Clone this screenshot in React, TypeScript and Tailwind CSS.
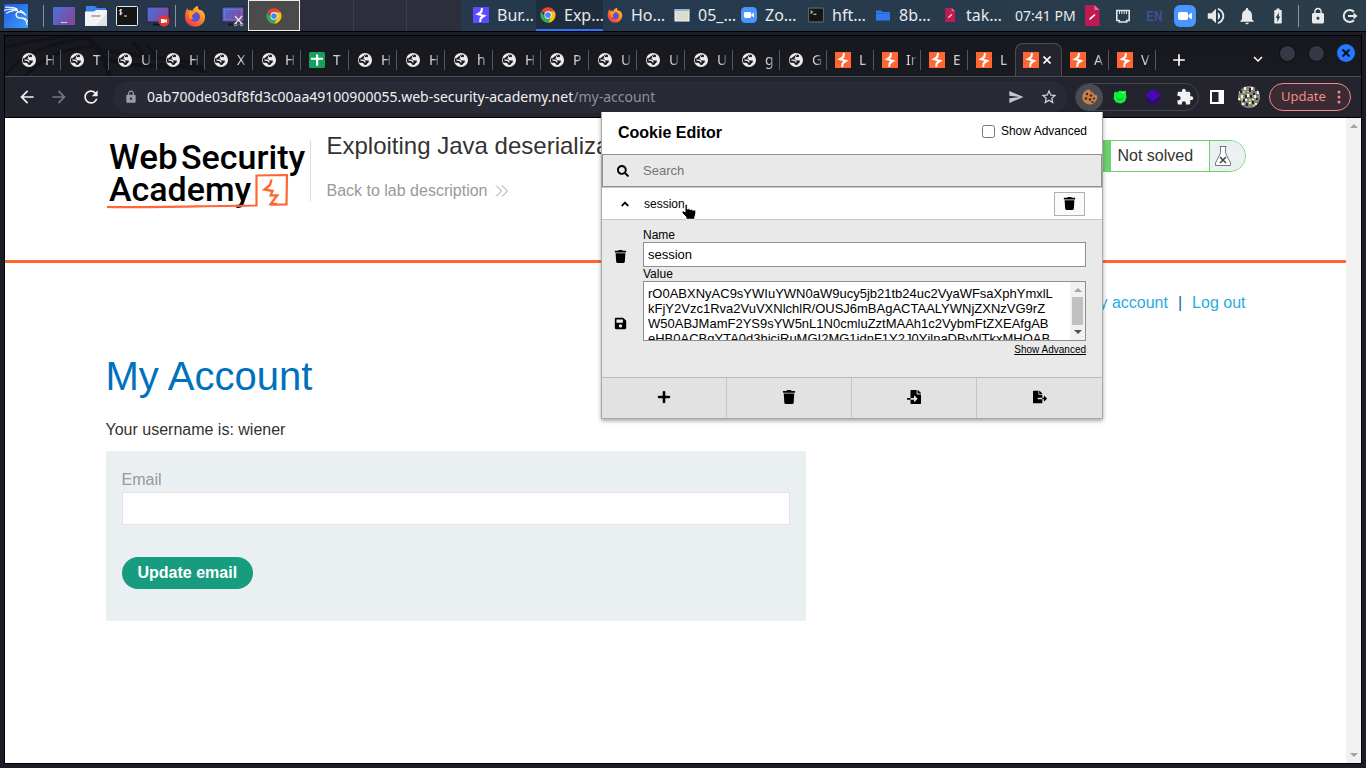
import React, { type ReactNode } from "react";
import { FaAngleUp, FaFileExport, FaFileImport, FaPlus, FaSave, FaSearch, FaTrash } from "react-icons/fa";
import {
  MdAdd,
  MdArrowBack,
  MdArrowForward,
  MdBatteryChargingFull,
  MdExtension,
  MdKeyboardArrowDown,
  MdLock,
  MdNotifications,
  MdRefresh,
  MdSend,
  MdStarBorder,
  MdVolumeUp,
} from "react-icons/md";
import { SiKalilinux } from "react-icons/si";

const COOKIE_VALUE = [
  "rO0ABXNyAC9sYWIuYWN0aW9ucy5jb21tb24uc2VyaWFsaXphYmxlL",
  "kFjY2Vzc1Rva2VuVXNlchlR/OUSJ6mBAgACTAALYWNjZXNzVG9rZ",
  "W50ABJMamF2YS9sYW5nL1N0cmluZztMAAh1c2VybmFtZXEAfgAB",
  "eHB0ACBqYTA0d3hjcjRuMGI2MG1jdnF1Y2J0YjlnaDByNTkxMHQAB",
  "ndpZW5lcg==",
].join("\n");

/* ---------- logos ---------- */

function ChromeLogo({ className = "size-4" }: { className?: string }) {
  return (
    <svg viewBox="0 0 48 48" className={className} aria-hidden="true">
      <path d="M24 24 4.1 12.5A23 23 0 0 1 43.9 12.5H24Z" fill="#e94335" />
      <path d="M24 13H43.9A23 23 0 0 1 24 47L33.5 29.5Z" fill="#fbc116" />
      <path d="M4.1 12.5 14.5 29.5 33.5 29.5 24 47A23 23 0 0 1 4.1 12.5Z" fill="#34a853" />
      <circle cx="24" cy="24" r="11" fill="#fff" />
      <circle cx="24" cy="24" r="8.6" fill="#4285f4" />
    </svg>
  );
}

function FirefoxLogo({ className = "size-4" }: { className?: string }) {
  return (
    <svg viewBox="0 0 24 24" className={className} aria-hidden="true">
      <defs>
        <linearGradient id="fox" x1="1" y1="0" x2="0.2" y2="1">
          <stop offset="0" stopColor="#ffe04a" />
          <stop offset="0.45" stopColor="#ff8a20" />
          <stop offset="1" stopColor="#f0304e" />
        </linearGradient>
      </defs>
      <path
        d="M15.5 1c-.8 1.5-.2 3 1 4.2l3 .8c2.4 2 3.5 4.5 3.5 7.3A11 10.5 0 0 1 1 13.3C1 9.5 2 6 3.6 3.3l1 2.5L7 5.2l2 1.3C10 3.5 12.5 1.5 15.5 1Z"
        fill="url(#fox)"
      />
      <circle cx="12.3" cy="13" r="5.2" fill="#5b4fd6" />
      <path d="M4.5 8.5 8 6.6l2.5 1.2 2 .4-2.2 2-1.5 1.3c-.6 1.4.2 3 1.7 3.4-2.5 1.4-5-.4-5-2.9Z" fill="#ff9a25" />
    </svg>
  );
}

function BurpLogo({ className = "size-4", color = "#ff6633" }: { className?: string; color?: string }) {
  return (
    <svg viewBox="0 0 16 16" className={className} aria-hidden="true">
      <rect width="16" height="16" fill={color} />
      <path d="M9 1 8.4 5 4.8 7.2 11.2 8.8 7.6 11.2 7.2 15" fill="none" stroke="#fff" strokeWidth="2" />
      <path d="M8.4 3 4.2 7.6 8 7.8ZM8 8.2l4 .4L7.6 13Z" fill="#fff" />
    </svg>
  );
}

function GlobeLogo() {
  return (
    <svg viewBox="0 0 16 16" className="size-4" aria-hidden="true">
      <circle cx="8" cy="8" r="7" fill="#ececec" />
      <path
        d="M9.3 2.4c-1.9 0-2 1.3-3.400 1.800C4.600 4.700 4.900 6 3 6.200l-1 .4C1.700 8 1.800 9.500 2.500 10.700c1.800.2 3.800-.1 4 .9.2.9.600 1.400 1.700 1.500l1.700-.500c0-1.200.7-1.500 1.300-1.900.8-.5.8-1.700.4-2.200H8.800c-.9 0-1.200-.6-1.200-1.300H6.200c.1-.8.800-1.100 1.600-1.100h1.600c.2-.8.9-1 1.500-1.400V3.200Z"
        fill="#17181d"
      />
      <path d="M3.400 7.800c1.300.4 2.600.2 3.700.9.7.5.5 1.400 1.300 1.700" stroke="#ececec" strokeWidth="1.3" fill="none" />
      <path d="M8.600 3.600c-.9.300-1.500 1.100-1.300 1.900h2.500" stroke="#ececec" strokeWidth="1" fill="none" />
    </svg>
  );
}

function SheetsLogo() {
  return (
    <svg viewBox="0 0 16 16" className="size-4" aria-hidden="true">
      <rect width="16" height="16" rx="1.5" fill="#14a15f" />
      <path d="M7 2.500h2.200v3.300H14v2H9.200v6H7v-6H2v-2h5Z" fill="#fff" />
    </svg>
  );
}

function ZoomLogo({ className = "size-4" }: { className?: string }) {
  return (
    <svg viewBox="0 0 22 22" className={className} aria-hidden="true">
      <rect width="22" height="22" rx="6" fill="#4a94ff" />
      <rect x="4" y="7" width="10" height="8" rx="2" fill="#fff" />
      <path d="M14.500 10 18 7.500v7L14.500 12Z" fill="#fff" />
    </svg>
  );
}

function TerminalLogo({ className = "size-4", big = false }: { className?: string; big?: boolean }) {
  return (
    <svg viewBox="0 0 22 20" className={className} aria-hidden="true">
      <rect x=".5" y=".5" width="21" height="19" rx="1" fill="#151515" stroke={big ? "#e8e8e8" : "#8a8d90"} />
      {big ? (
        <path d="M6 4c-2-.6-3 .2-2.400 1.200s2.500.8 2.400 2-1.800 1.300-2.800.6M4.700 3v6.200M8 10h3" fill="none" stroke="#eee" />
      ) : (
        <path d="m3.500 4 2.500 2-2.500 2M7.500 9h4" fill="none" stroke="#ddd" strokeWidth="1.5" />
      )}
    </svg>
  );
}

function FolderLogo() {
  return (
    <svg viewBox="0 0 16 16" className="size-4" aria-hidden="true">
      <path d="M1 3.500h5l1.500 1.500H15v8.500H1Z" fill="#3478f0" />
      <path d="M1 6.500h14" stroke="#2a64d4" />
    </svg>
  );
}

function NoteLogo({ className = "size-4" }: { className?: string }) {
  return (
    <svg viewBox="0 0 16 21" className={className} aria-hidden="true">
      <path d="M1 0h9.500l5 5v16H1Z" fill="#c01a52" />
      <path d="M10.500 0v5h5Z" fill="#d9749a" />
      <path d="m5 15 1-2.200L10.500 9l1 1L7 14.300Z" fill="#fff" />
    </svg>
  );
}

function WindowLogo() {
  return (
    <svg viewBox="0 0 16 16" className="size-4" aria-hidden="true">
      <rect x="1" y="2.5" width="14" height="11.5" fill="#dcdcd2" stroke="#f6f6f6" />
      <path d="M1 3h14" stroke="#7ea6d8" strokeWidth="1.5" />
    </svg>
  );
}

function DesktopLogo({ kind }: { kind: "plain" | "record" | "cut" }) {
  return (
    <svg viewBox="0 0 24 22" className="h-[22px] w-6" aria-hidden="true">
      <defs>
        <linearGradient id={`desk-${kind}`} x1="0" y1="0" x2="1" y2="0.6">
          <stop offset="0" stopColor="#4673dc" />
          <stop offset="1" stopColor="#84489c" />
        </linearGradient>
      </defs>
      {kind === "plain" ? (
        <>
          <rect x="1" y="2" width="22" height="18" fill={`url(#desk-${kind})`} />
          <path d="M9 17.500h6" stroke="#fff" strokeDasharray="1.5 .7" />
        </>
      ) : (
        <>
          <rect x="1" y="2" width="22" height="15" fill={`url(#desk-${kind})`} stroke="#202434" />
          <path d="M7 19.500h9" stroke="#11151d" strokeWidth="2" />
        </>
      )}
      {kind === "record" && (
        <>
          <circle cx="18" cy="16" r="5.6" fill="#e63430" />
          <path d="M15 14h3.500v1.200l2.300-1.200v4l-2.300-1.200V18H15Z" fill="#fff" />
        </>
      )}
      {kind === "cut" && (
        <>
          <rect x="3.5" y="4.5" width="17" height="10" fill="none" stroke="#7c8be6" strokeDasharray="1 1" />
          <path d="m14 11 7 8m0-8-7 8" stroke="#e0e0e0" strokeWidth="1.3" />
          <circle cx="14.5" cy="19.3" r="1.4" fill="none" stroke="#ccc" />
          <circle cx="20.5" cy="19.3" r="1.4" fill="none" stroke="#ccc" />
        </>
      )}
    </svg>
  );
}

function FilesLogo() {
  return (
    <svg viewBox="0 0 24 22" className="h-[22px] w-6" aria-hidden="true">
      <path d="M2 1h9l2 2h9v6H2Z" fill="#3c82f0" />
      <path d="M1 6.500h9l2-1.500h11V21H1Z" fill="#f3f3f3" />
      <path d="M23 8 12 21h11Z" fill="#e2e2e2" />
      <path d="M8 11h8" stroke="#9b9b9b" strokeWidth="1.5" strokeLinecap="round" />
    </svg>
  );
}

/* ---------- desktop panel ---------- */

function Separator() {
  return <span className="block h-[22px] w-px bg-[#8b929b]" />;
}

const TASKS: { label: string; icon: ReactNode; active?: boolean }[] = [
  { label: "Bur…", icon: <BurpLogo color="#5b4dff" /> },
  { label: "Exp…", icon: <ChromeLogo />, active: true },
  { label: "Ho…", icon: <FirefoxLogo /> },
  { label: "05_…", icon: <WindowLogo /> },
  { label: "Zo…", icon: <ZoomLogo /> },
  { label: "hft…", icon: <TerminalLogo /> },
  { label: "8b…", icon: <FolderLogo /> },
  { label: "tak…", icon: <NoteLogo className="h-[14px] w-4" /> },
];

const TRAY: { name: string; icon: ReactNode }[] = [
  { name: "Notes", icon: <NoteLogo className="h-[21px] w-4" /> },
  {
    name: "Network",
    icon: (
      <svg viewBox="0 0 16 16" className="size-4" aria-hidden="true">
        <path d="M1.800 2.500h12.400v10h-2.500V14H4.300v-1.500H1.800Z" fill="none" stroke="#e4e6e8" strokeWidth="1.6" />
        <path d="M4.500 3v3M6.800 3v3M9.200 3v3M11.500 3v3" stroke="#e4e6e8" />
      </svg>
    ),
  },
  {
    name: "Keyboard layout",
    icon: <span className="font-['DejaVu_Sans_Mono',monospace] text-sm font-bold text-[#414c94]">EN</span>,
  },
  { name: "Zoom", icon: <ZoomLogo className="size-[22px]" /> },
  { name: "Volume", icon: <MdVolumeUp className="size-[22px]" /> },
  { name: "Notifications", icon: <MdNotifications className="size-5" /> },
  { name: "Battery", icon: <MdBatteryChargingFull className="size-[18px]" /> },
];

function DesktopPanel() {
  return (
    <header className="flex h-[31px] shrink-0 items-stretch bg-linear-to-r from-[#27374b] via-[#253a4e] to-[#2b3d49] font-['Noto_Sans',sans-serif] text-[#e8eaec]">
      <div className="flex w-[248px] shrink-0 items-center">
        <button aria-label="Applications" className="ml-1 flex size-6 items-center justify-center bg-linear-to-br from-[#2456d8] to-[#3da0ff] text-white">
          <SiKalilinux className="size-6" stroke="currentColor" strokeWidth="0.7" />
        </button>
        <span className="ml-[15px]"><Separator /></span>
        <div className="ml-2 flex items-center gap-2">
          <button aria-label="Show desktop"><DesktopLogo kind="plain" /></button>
          <button aria-label="Files"><FilesLogo /></button>
          <button aria-label="Terminal"><TerminalLogo big className="h-5 w-[22px]" /></button>
          <button aria-label="Screen recorder"><DesktopLogo kind="record" /></button>
        </div>
        <span className="ml-[5px]"><Separator /></span>
        <button aria-label="Firefox" className="ml-2"><FirefoxLogo className="size-[22px]" /></button>
        <button aria-label="Screenshot" className="ml-[15px]"><DesktopLogo kind="cut" /></button>
      </div>
      <div className="flex w-[213px] shrink-0 bg-[#2c2e3b]">
        <button aria-label="Workspace 1" className="flex w-[52px] items-center justify-center border border-[#ededed] bg-[#4b4b4b]">
          <ChromeLogo />
        </button>
        <button aria-label="Workspace 2" className="w-[54px] border-r border-[#3b3e4c]" />
        <button aria-label="Workspace 3" className="w-[53px] border-r border-[#3b3e4c]" />
        <button aria-label="Workspace 4" className="flex-1" />
      </div>
      <nav aria-label="Windows" className="flex pl-2">
        {TASKS.map((t) => (
          <button
            key={t.label}
            className={`flex w-[67px] items-center gap-2 border-b-2 pl-1 text-base whitespace-nowrap ${
              t.active ? "border-[#2777ff] bg-[#202d3c]" : "border-transparent"
            }`}
          >
            <span className="shrink-0">{t.icon}</span>
            {t.label}
          </button>
        ))}
      </nav>
      <div className="flex flex-1 items-center pl-[10px]">
        <time className="mr-px text-sm whitespace-nowrap">07:41 PM</time>
        {TRAY.map(({ name, icon }) => (
          <button key={name} aria-label={name} className="flex w-[31px] items-center justify-center">{icon}</button>
        ))}
        <span className="ml-1"><Separator /></span>
        <button aria-label="Lock" className="ml-[10px]"><MdLock className="size-[18px]" /></button>
        <button aria-label="Log out" className="ml-[15px]">
          <svg viewBox="0 0 16 16" className="size-4" fill="none" stroke="#e4e6e8" strokeWidth="2" aria-hidden="true">
            <path d="M12 12.200A6 6 0 1 1 12 3.800M6 8h7" />
            <path d="m11.500 4.500 4 3.500-4 3.500Z" fill="#e4e6e8" stroke="none" />
          </svg>
        </button>
      </div>
    </header>
  );
}

/* ---------- browser chrome ---------- */

type Kind = "globe" | "sheets" | "burp";
const TABS: { label: string; kind: Kind; active?: boolean }[] = [
  ..."H,T,U,H,X,H".split(",").map((label) => ({ label, kind: "globe" as Kind })),
  { label: "T", kind: "sheets" },
  ..."H,H,h,H,P,U,U,U,g,G".split(",").map((label) => ({ label, kind: "globe" as Kind })),
  ..."L,In,E,L".split(",").map((label) => ({ label, kind: "burp" as Kind })),
  { label: "", kind: "burp", active: true },
  { label: "A", kind: "burp" },
  { label: "V", kind: "burp" },
];

function TabIcon({ kind }: { kind: Kind }) {
  if (kind === "sheets") return <SheetsLogo />;
  if (kind === "burp") return <BurpLogo />;
  return <GlobeLogo />;
}

function TabStrip() {
  return (
    <div className="relative flex h-[41px] items-end overflow-hidden border-b border-[#4b4d56] bg-linear-to-b from-[#17181d] to-[#1a1b21] pl-2">
      <svg viewBox="0 0 220 40" className="absolute top-0 left-0 h-10 w-[220px]" fill="none" stroke="#121318" aria-hidden="true">
        <path d="M0 40C15 18 45 6 85 2M20 40C40 20 60 12 90 10M0 12C25 4 50 1 80 0" strokeWidth="3" />
        <path d="M82 0c12 12 20 26 22 40" strokeWidth="5" />
        <path d="M92 14c18 2 40 6 60 8 20 2 36 2 48 13-20-7-34-4-46-6M128 6l10 12M142 8l8 12M100 20c18 14 50 6 72 14" strokeWidth="4" />
      </svg>
      <div role="tablist" className="relative flex h-[33px]">
        {TABS.map((t, i) =>
          t.active ? (
            <div key={i} role="tab" aria-selected="true" className="flex w-[47px] items-center gap-1 rounded-t-lg border border-b-0 border-[#4b4d56] bg-[#23242e] pl-[7px]">
              <TabIcon kind={t.kind} />
              <button aria-label="Close tab" className="text-white">
                <svg viewBox="0 0 8 8" className="size-2" stroke="currentColor" strokeWidth="1.6" aria-hidden="true">
                  <path d="m.5.5 7 7m0-7-7 7" />
                </svg>
              </button>
            </div>
          ) : (
            <div key={i} role="tab" aria-selected="false" className={`flex items-center pl-2 ${i < 15 ? "w-12" : "w-[47px]"}`}>
              <TabIcon kind={t.kind} />
              <span className="ml-2 w-[11px] overflow-hidden mask-r-from-40% text-sm whitespace-nowrap text-[#d2d3d6]">{t.label}</span>
              <span className={`ml-auto h-5 w-px ${i === 20 ? "bg-transparent" : "bg-[#55575e]"}`} />
            </div>
          ),
        )}
      </div>
      <button aria-label="New tab" className="relative mb-[6px] ml-[13px] text-white">
        <MdAdd className="size-5" />
      </button>
      <div className="relative mr-[6px] mb-2 ml-auto flex items-center gap-3 text-white">
        <button aria-label="Search tabs" className="mt-3"><MdKeyboardArrowDown className="size-[18px]" /></button>
        <button aria-label="Minimize" className="size-[17px] rounded-full border border-[#0b0c10] bg-[#363945]" />
        <button aria-label="Maximize" className="size-[17px] rounded-full border border-[#0b0c10] bg-[#363945]" />
        <button aria-label="Close" className="flex size-[18px] items-center justify-center rounded-full bg-[#2777ff]">
          <svg viewBox="0 0 8 8" className="size-2" stroke="#0c1220" strokeWidth="2" aria-hidden="true">
            <path d="m.5.5 7 7m0-7-7 7" />
          </svg>
        </button>
      </div>
    </div>
  );
}

function Toolbar() {
  return (
    <div className="flex h-[41px] items-center border-b border-black bg-[#23242e] pr-[10px] pl-3 font-['Noto_Sans',sans-serif] text-[#f1f1f1]">
      <div className="flex gap-3">
        <button aria-label="Back"><MdArrowBack className="size-5" /></button>
        <button aria-label="Forward" className="text-[#77787e]"><MdArrowForward className="size-5" /></button>
        <button aria-label="Reload"><MdRefresh className="size-5" /></button>
      </div>
      <div className="ml-3 flex h-8 flex-1 items-center rounded-full bg-[#282a36] pr-[9px] pl-[11px]">
        <MdLock className="size-[14px] text-[#9b9ca6]" />
        <div className="ml-[9px] flex-1 text-sm whitespace-nowrap">
          0ab700de03df8fd3c00aa49100900055.web-security-academy.net<span className="text-[#8f9098]">/my-account</span>
        </div>
        <button aria-label="Share" className="text-[#c6c7cb]"><MdSend className="size-4" /></button>
        <button aria-label="Bookmark" className="ml-4 text-[#d5d6d9]"><MdStarBorder className="size-[18px]" /></button>
      </div>
      <div className="ml-2 flex h-7 w-[124px] items-center rounded-full border border-[#43454f]">
        <button aria-label="Cookie Editor" className="flex size-[27px] items-center justify-center rounded-full bg-[#4a4b53]">
          <svg viewBox="0 0 16 16" className="size-4" aria-hidden="true">
            <path d="M8 .5c0 2 1.500 3 3 2.800 0 1.700 1.500 3 4 2.800A7.500 7.500 0 1 1 8 .500Z" fill="#c97f4c" />
            <g fill="#3e2414">
              <circle cx="5" cy="5" r="1.2" /><circle cx="9" cy="6.5" r="1.2" /><circle cx="4" cy="9.5" r="1.2" />
              <circle cx="8" cy="10.5" r="1.3" /><circle cx="12" cy="9.5" r="1.1" /><circle cx="10.5" cy="13" r="1" />
            </g>
          </svg>
        </button>
        <button aria-label="Green extension" className="ml-[9px]">
          <svg viewBox="0 0 16 16" className="size-4" aria-hidden="true">
            <path d="M2 4 4 2.200 4.600 3.500 8 1.500l4 1L14 1.500 14 5.500l.5 3-1.500 4-4 2-5-1-2.500-4 .500-2Z" fill="#0df23c" />
            <path d="M5 9.500c2 1.500 4.500 1 6-.8" stroke="#0a9c2c" fill="none" />
            <path d="m10 4 2.500-1" stroke="#c9ffd2" />
          </svg>
        </button>
        <button aria-label="Layers extension" className="ml-4">
          <svg viewBox="0 0 18 18" className="size-[18px]" aria-hidden="true">
            <path d="m9 6 8 5-8 6-8-6Z" fill="#2c0a78" />
            <path d="m9 1 8 6-8 6-8-6Z" fill="#4a07b8" />
          </svg>
        </button>
        <button aria-label="Extensions" className="ml-[14px]"><MdExtension className="size-[18px]" /></button>
      </div>
      <button aria-label="Side panel" className="ml-[11px]">
        <svg viewBox="0 0 14 14" className="size-[14px]" aria-hidden="true">
          <path d="M0 0h14v14H0Zm2 2v10h6.500V2Z" fill="#fff" fillRule="evenodd" />
        </svg>
      </button>
      <button aria-label="Profile" className="ml-[14px]">
        <svg viewBox="0 0 22 22" className="size-[22px]" aria-hidden="true">
          <clipPath id="face"><circle cx="11" cy="11" r="11" /></clipPath>
          <g clipPath="url(#face)">
            <rect width="22" height="22" fill="#85877c" />
            <path d="M1 4v3M4 9v3M7 1v3M10 8v3M14 1v3M17 9v3M20 5v3M5 17v2M12 16v2M18 17v2M8 13v2M15 13v1M1 12v2" stroke="#f4f3ea" strokeWidth="2.2" />
            <path d="M3 4v3M8 9v3M12 2v4M15 15v3M19 12v2M2 15v3M9 17v3M13 9v3M6 13v3M18 2v3M16 7v2" stroke="#1d1f24" strokeWidth="1.8" />
            <path d="M6 5v2M12 13v2M4 12v2M16 19v2M10 5v1" stroke="#d8c64a" strokeWidth="2" />
            <path d="M16 5v2" stroke="#c33" strokeWidth="2" /><path d="M19 8v2M7 19v2" stroke="#4a78b8" strokeWidth="2" />
          </g>
        </svg>
      </button>
      <button className="ml-[9px] flex h-7 w-[82px] items-center justify-between rounded-full border border-[#ee8d80] bg-[#3a2a33] pr-[9px] pl-[11px] text-[13px] text-[#ee8d80]">
        Update
        <svg viewBox="0 0 4 14" className="h-[14px] w-1" fill="currentColor" aria-hidden="true">
          <circle cx="2" cy="2" r="1.5" /><circle cx="2" cy="7" r="1.5" /><circle cx="2" cy="12" r="1.5" />
        </svg>
      </button>
    </div>
  );
}

/* ---------- page ---------- */

function AcademyLogo() {
  return (
    <svg viewBox="0 0 204 76" className="h-[76px] w-[204px] shrink-0" role="img" aria-label="Web Security Academy">
      <g fontFamily="Roboto, sans-serif" fontWeight="500" fill="#000">
        <text x="3" y="31" fontSize="35">Web</text>
        <text x="75" y="31" fontSize="34">Security</text>
        <text x="3" y="63" fontSize="34">Academy</text>
      </g>
      <path d="M1 69c30 1 95-1 149.500-1.500V37.500L181 37l-.5 29.500-16 .2" fill="none" stroke="#ff6633" strokeWidth="2.2" />
      <path d="m165.500 41.500-1.500 5.500-5.500 4.500 8 1.500-1.800 4.300 6.500.2-6.500 8.500h6" fill="none" stroke="#ff6633" strokeWidth="2.4" />
    </svg>
  );
}

function LabHeader() {
  return (
    <div className="h-[145px] border-b-3 border-[#ff6633]">
      <div className="mx-auto flex max-w-[1140px] items-start">
        <div className="flex pt-5">
          <AcademyLogo />
          <span className="mt-[2px] h-[62px] w-px bg-[#dedede]" />
        </div>
        <div className="pt-[14px] pl-4 whitespace-nowrap">
          <h2 className="text-2xl leading-7">Exploiting Java deserialization with Apache Commons</h2>
          <a href="#lab" className="mt-[19px] flex items-center gap-2 leading-6 text-[#999]">
            Back to lab description
            <svg viewBox="0 0 14 12" className="h-3 w-[14px]" fill="none" stroke="#999" aria-hidden="true">
              <path d="m1 .5 5.500 5.500L1 11.500M7 .5 12.500 6 7 11.500" />
            </svg>
          </a>
        </div>
        <div className="mt-[22px] ml-auto flex h-8 overflow-hidden rounded-r-full border border-[#6dd26c]">
          <span className="flex items-center bg-[#6dd26c] px-2 font-bold text-white">LAB</span>
          <span className="flex w-[99px] items-center border-r border-[#6dd26c] bg-white pl-[7px]">Not solved</span>
          <span className="flex w-[35px] items-center bg-[#ebf0f3] pl-1">
            <svg viewBox="0 0 18 22" className="h-[22px] w-[18px]" fill="#fff" stroke="#777" aria-hidden="true">
              <path d="M5.500 1.500h7M6.500 2v6L1.500 18v2.500h15V18l-5-10V2" />
              <path d="m6 12 6 6m0-6-6 6" stroke="#444" strokeWidth="1.6" />
            </svg>
          </span>
        </div>
      </div>
    </div>
  );
}

function AccountPage() {
  return (
    <main className="min-w-0 flex-1 bg-white font-['Liberation_Sans',Arial,sans-serif] text-base text-[#333332]">
      <LabHeader />
      <div className="mx-auto max-w-[1140px] pt-7">
        <nav className="flex justify-end gap-[10px] text-[#29abe2]">
          <a href="#home">Home</a>
          <span className="text-[#333332]">|</span>
          <a href="#my-account">My account</a>
          <span className="text-[#1c5f96]">|</span>
          <a href="#logout">Log out</a>
        </nav>
        <h1 className="mt-9 text-[40px] leading-[50px] text-[#0071bc]">My Account</h1>
        <p className="mt-[17px] leading-6">Your username is: wiener</p>
        <form className="mt-[9px] h-[170px] max-w-[700px] bg-[#eaeff2] px-4 pt-[17px]" onSubmit={(e) => e.preventDefault()}>
          <label htmlFor="email" className="block leading-6 text-[#999]">Email</label>
          <input id="email" type="email" className="block h-[33px] w-full border border-[#e4e4e4] bg-white px-2" />
          <button className="mt-8 h-8 rounded-full bg-[#189c80] px-4 font-bold text-white">Update email</button>
        </form>
      </div>
    </main>
  );
}

function Triangle({ down = false, className = "" }: { down?: boolean; className?: string }) {
  return (
    <svg viewBox="0 0 8 4" className={`h-1 w-2 ${className}`} fill="currentColor" aria-hidden="true">
      <path d={down ? "M0 0h8L4 4Z" : "M0 4h8L4 0Z"} />
    </svg>
  );
}

/* ---------- extension popup ---------- */

function CookieEditor() {
  return (
    <section
      aria-label="Cookie Editor"
      className="absolute top-[76px] right-[258px] w-[502px] border border-t-0 border-[#a8a8a8] bg-[#e9e9e9] font-['Liberation_Sans',Arial,sans-serif] text-xs text-black shadow-[0_2px_4px_rgba(0,0,0,0.35)]"
    >
      <div className="flex h-[42px] items-center justify-between bg-white pr-[15px] pl-4">
        <h2 className="text-base font-bold">Cookie Editor</h2>
        <label className="flex items-center gap-[6px] pb-1">
          <input type="checkbox" className="size-[13px]" />
          Show Advanced
        </label>
      </div>
      <label className="flex h-[33px] items-center border border-[#8f8f8f] pl-[14px]">
        <FaSearch className="size-3" />
        <input aria-label="Search" placeholder="Search" className="ml-[14px] flex-1 text-[13px] outline-none placeholder:text-[#757575]" />
      </label>
      <div className="flex h-[33px] items-center border-t border-b border-[#c8c8c8] bg-white pr-[17px] pl-[17px]">
        <FaAngleUp className="size-3" />
        <span className="ml-[13px] flex-1">session</span>
        <button aria-label="Delete session" className="flex h-6 w-[31px] items-center justify-center border border-[#b0b0b0] bg-[#fafafa]">
          <FaTrash className="size-[13px]" />
        </button>
      </div>
      <div className="flex h-[157px] pt-2 pr-4">
        <div className="flex w-[41px] flex-col items-start gap-[54px] pt-[22px] pl-3">
          <button aria-label="Delete"><FaTrash className="size-[13px]" /></button>
          <button aria-label="Save"><FaSave className="size-[13px]" /></button>
        </div>
        <div className="flex min-w-0 flex-1 flex-col">
          <label htmlFor="cookie-name" className="leading-[14px]">Name</label>
          <input id="cookie-name" defaultValue="session" className="h-[25px] border border-[#8f8f8f] bg-white px-1 text-[13px]" />
          <label htmlFor="cookie-value" className="leading-[14px]">Value</label>
          <div className="flex h-[60px] border border-[#8f8f8f] bg-white">
            <textarea
              id="cookie-value"
              defaultValue={COOKIE_VALUE}
              className="h-full flex-1 resize-none overflow-hidden pt-1 pl-1 text-[13px] leading-[15px] whitespace-pre"
            />
            <div className="flex w-[15px] flex-col items-center bg-[#f1f1f1] py-[6px]">
              <Triangle className="text-[#a3a3a3]" />
              <span className="mt-[5px] h-7 w-[11px] bg-[#c1c1c1]" />
              <Triangle down className="mt-auto text-[#505050]" />
            </div>
          </div>
          <button className="mt-[2px] self-end text-[10px] leading-[14px] underline">Show Advanced</button>
        </div>
      </div>
      <div className="grid h-[41px] grid-cols-4 divide-x divide-[#c4c4c4] border-t border-[#b8b8b8] bg-[#e2e2e2]">
        {[
          { name: "Add", Icon: FaPlus },
          { name: "Delete all", Icon: FaTrash },
          { name: "Import", Icon: FaFileImport },
          { name: "Export", Icon: FaFileExport },
        ].map(({ name, Icon }) => (
          <button key={name} aria-label={name} className="flex items-center justify-center pb-[2px]">
            <Icon className="size-[14px]" />
          </button>
        ))}
      </div>
      <svg viewBox="0 0 16 17" className="absolute top-[91px] left-[79px] h-[17px] w-4" aria-hidden="true">
        <path
          d="M4 2c0-1.200 2-1.200 2.300 0V6l1.700-.4 1 .9 1.600-.3 1 .9 1.600-.1c1.200 0 1.600.6 1.600 1.500V11l-1 3v2.300H5v-2.300L1 10V8h2l1 1Z"
          fill="#000"
          stroke="#fff"
        />
      </svg>
    </section>
  );
}

export default function App() {
  return (
    <div className="flex min-h-screen flex-col bg-[#1b1c26]">
      <DesktopPanel />
      <div className="flex flex-1 flex-col border-t border-black px-1 pt-[3px] pb-1">
        <div className="relative flex flex-1 flex-col border border-black">
          <TabStrip />
          <Toolbar />
          <div className="flex flex-1">
            <AccountPage />
            <div className="flex w-[15px] flex-col items-center justify-between bg-[#f1f1f1] py-[6px] text-[#a3a3a3]">
              <Triangle />
              <Triangle down />
            </div>
          </div>
          <CookieEditor />
        </div>
      </div>
    </div>
  );
}
